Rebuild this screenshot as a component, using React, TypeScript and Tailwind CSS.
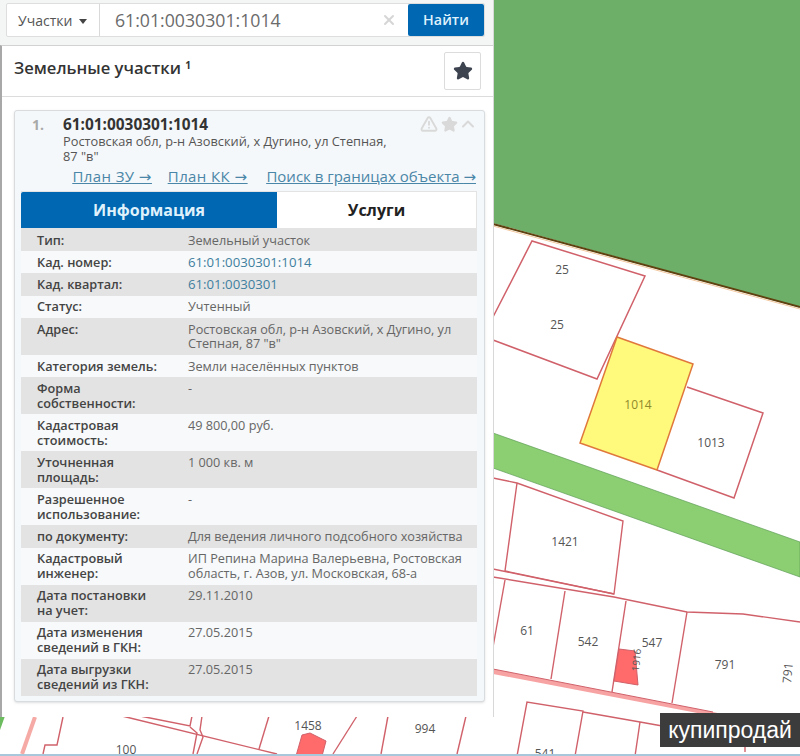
import { ChevronUp, Star, TriangleAlert, X } from "lucide-react";

const rows = [
  { label: "Тип:", value: "Земельный участок" },
  { label: "Кад. номер:", value: "61:01:0030301:1014", link: true },
  { label: "Кад. квартал:", value: "61:01:0030301", link: true },
  { label: "Статус:", value: "Учтенный" },
  { label: "Адрес:", value: "Ростовская обл, р-н Азовский, х Дугино, ул\nСтепная, 87 \"в\"" },
  { label: "Категория земель:", value: "Земли населённых пунктов" },
  { label: "Форма\nсобственности:", value: "-" },
  { label: "Кадастровая\nстоимость:", value: "49 800,00 руб." },
  { label: "Уточненная\nплощадь:", value: "1 000 кв. м" },
  { label: "Разрешенное\nиспользование:", value: "-" },
  { label: "по документу:", value: "Для ведения личного подсобного хозяйства" },
  { label: "Кадастровый\nинженер:", value: "ИП Репина Марина Валерьевна, Ростовская\nобласть, г. Азов, ул. Московская, 68-а" },
  { label: "Дата постановки\nна учет:", value: "29.11.2010" },
  { label: "Дата изменения\nсведений в ГКН:", value: "27.05.2015" },
  { label: "Дата выгрузки\nсведений из ГКН:", value: "27.05.2015" },
];

const lines = [
  "493,478 517,483 623,521 614,594 505,571 517,483",
  "493,569 614,594",
  "493,577 614,597 687,612 743,614 800,622",
  "505,580 493,647",
  "565,591 551,679",
  "626,601 612,692",
  "687,612 672,703",
  "517,756 527,702 583,711 575,756",
  "583,712 640,722 668,727",
  "640,722 635,756",
  "745,746 745,752",
  "63,717 57,745 45,745 43,754",
  "122,716 277,754",
  "140,716 190,726 192,716",
  "202,716 200,730 203,737 197,754",
  "190,727 197,733 193,754",
  "269,716 259,749",
  "357,716 333,754",
  "388,716 381,754",
  "466,716 457,754",
];

const labels = [
  { x: 562, y: 274, t: "25" },
  { x: 557, y: 329, t: "25" },
  { x: 638, y: 409, t: "1014", c: "#8f8a2c" },
  { x: 711, y: 447, t: "1013" },
  { x: 565, y: 546, t: "1421" },
  { x: 527, y: 635, t: "61" },
  { x: 588, y: 646, t: "542" },
  { x: 652, y: 647, t: "547" },
  { x: 725, y: 669, t: "791" },
  { x: 308, y: 730, t: "1458" },
  { x: 425, y: 733, t: "994" },
  { x: 126, y: 754, t: "100" },
  { x: 545, y: 758, t: "541" },
];

function MapLayer() {
  return (
    <svg className="absolute inset-0" width="800" height="756" viewBox="0 0 800 756">
      <polygon points="493,0 800,0 800,307 493,223" fill="#6dae68" />
      <line x1="493" y1="224" x2="800" y2="307" stroke="#5f4210" strokeWidth="2" />
      <line x1="493" y1="226" x2="800" y2="309" stroke="#f3c9a0" strokeWidth="1" />
      <polygon points="493,433 800,542 800,577 493,468" fill="#8ccf72" stroke="#5f9e57" strokeWidth="0.7" />
      <polyline points="493,317 532,241 645,276 597,379 493,340" fill="#fff" stroke="#d0616a" strokeWidth="1.5" />
      <polyline points="687,387 763,413 734,498 657,470" fill="#fff" stroke="#d0616a" strokeWidth="1.5" />
      <polygon points="617,337 693,364 657,470 580,443" fill="#fff97c" stroke="#e0783c" strokeWidth="1.5" />
      <polygon points="493,669 713,712 740,718 713,716 493,674" fill="#f7a3a3" />
      <line x1="493" y1="669" x2="713" y2="712" stroke="#d0616a" strokeWidth="1" />
      <line x1="35" y1="717" x2="22" y2="754" stroke="#f5aaa5" strokeWidth="4" />
      <polygon points="0,716 5,716 0,730" fill="#6dbb5f" />
      {lines.map((points) => (
        <polyline key={points} points={points} fill="none" stroke="#d0616a" strokeWidth="1.4" />
      ))}
      <polygon points="619,649 635,651 638,685 614,681" fill="#ff6a6a" stroke="#d0616a" />
      <polygon points="302,735 310,733 326,741 322,756 296,756" fill="#ff6a6a" stroke="#d0616a" />
      {labels.map((l) => (
        <text
          key={l.t + l.x}
          x={l.x}
          y={l.y}
          textAnchor="middle"
          fontSize="12"
          fill={l.c ?? "#555"}
          fontFamily="'Open Sans', sans-serif"
        >
          {l.t}
        </text>
      ))}
      <text x="636" y="664" textAnchor="middle" fontSize="10" fill="#555" fontFamily="'Open Sans', sans-serif" transform="rotate(-84 636 660)">
        1916
      </text>
      <text x="788" y="677" textAnchor="middle" fontSize="12" fill="#555" fontFamily="'Open Sans', sans-serif" transform="rotate(-84 788 673)">
        791
      </text>
    </svg>
  );
}

function SearchBar() {
  return (
    <div className="h-[45px] bg-[#f4f5f5] pt-[3px] pl-[6px] pr-2">
      <div className="flex h-[34px] w-[479px] rounded-[2px] border border-[#dedede] bg-white">
        <div className="flex w-[93px] items-center gap-[7px] border-r border-[#d9d9d9] pl-[11px] text-[14px] text-[#555]">
          Участки
          <span className="mt-[2px] h-0 w-0 border-x-[4.5px] border-t-[5px] border-x-transparent border-t-[#444]" />
        </div>
        <div className="flex-1 pl-[15px] text-[17.7px] leading-[32px] text-[#6b6b6b]">61:01:0030301:1014</div>
        <X className="mt-[8px] mr-[11px] size-[16px] text-[#d6d6d6]" strokeWidth={3} />
        <button className="w-[76px] rounded-[2px] bg-[#0067b3] text-[14.3px] font-semibold text-[#dff1fb]">Найти</button>
      </div>
    </div>
  );
}

function Links() {
  const arrow = <span className="font-['DejaVu_Sans',sans-serif]">→</span>;
  return (
    <div className="mt-[2px] flex justify-end pr-[1px] text-[15px] leading-[20px] text-[#4a86a8] underline">
      <a className="tracking-[0.4px]">План ЗУ {arrow}</a>
      <a className="ml-[16px] tracking-[0.4px]">План КК {arrow}</a>
      <a className="ml-[19px]">Поиск в границах объекта {arrow}</a>
    </div>
  );
}

function InfoRows() {
  return (
    <div className="text-[12.7px] leading-[14.8px]">
      {rows.map((row, index) => (
        <div key={row.label} className={`flex py-[3.73px] ${index % 2 === 0 ? "bg-[#e3e3e3]" : "bg-[#f7f9fa]"}`}>
          <div className="w-[167px] shrink-0 whitespace-pre-line pl-[16px] font-semibold text-[#444]">{row.label}</div>
          <div className={`whitespace-pre-line ${row.link ? "text-[13.2px] text-[#3f7f9f]" : "text-[#666]"}`}>{row.value}</div>
        </div>
      ))}
    </div>
  );
}

export default function App() {
  return (
    <div className="relative h-[756px] w-[800px] overflow-hidden bg-white font-['Open_Sans',sans-serif]">
      <MapLayer />
      <div className="relative w-[494px] border-r border-[#d8d8d8]">
        <SearchBar />
        <div className="border-t border-[#d2d2d2] border-l-2 border-l-[#a8a8a8] bg-white pb-[15px]">
          <div className="flex h-[51px] items-center justify-between border-b border-[#dcdcdc] pl-[12px] pr-[12px]">
            <h2 className="mb-[6px] text-[16.6px] font-semibold text-[#333]">
              Земельные участки <sup className="text-[10px] font-bold">1</sup>
            </h2>
            <button className="flex h-[38px] w-[37px] items-center justify-center rounded-[2px] border border-[#dcdcdc] bg-white">
              <Star className="size-[20px] fill-[#3d4450] text-[#3d4450]" />
            </button>
          </div>
          <div className="ml-[12px] mr-[8px] mt-[13px] rounded-[3px] border border-[#d8dcdf] bg-[#f5f8fa] pl-[6px] pr-[7px] pb-[5px] shadow-sm">
            <div className="flex pt-[4px]">
              <div className="w-[42px] pl-[11px] text-[14px] leading-[20px] font-bold text-[#a9a9a9]">1.</div>
              <div className="flex-1">
                <div className="text-[15.4px] leading-[20px] font-bold text-[#333]">61:01:0030301:1014</div>
                <div className="-mt-[1px] text-[12.8px] leading-[15px] text-[#555]">
                  Ростовская обл, р-н Азовский, х Дугино, ул Степная,
                  <br />
                  87 "в"
                </div>
              </div>
              <div className="-mr-[1px] flex h-[18px] items-center">
                <TriangleAlert className="size-[18px] text-[#d9d9d9]" strokeWidth={2.5} />
                <Star className="ml-[3px] size-[17px] fill-[#d9d9d9] text-[#d9d9d9]" />
                <ChevronUp className="size-[20px] text-[#d9d9d9]" strokeWidth={2.5} />
              </div>
            </div>
            <Links />
            <div className="mt-[4px] flex h-[38px] border-y border-r border-[#e3e3e3] bg-white text-[16px] font-bold">
              <div className="flex w-[256px] items-center justify-center rounded-tl-[2px] bg-[#0067b3] text-[#dff1fb]">Информация</div>
              <div className="flex flex-1 items-center justify-center text-[#222]">Услуги</div>
            </div>
            <InfoRows />
          </div>
        </div>
      </div>
      <div className="absolute right-0 top-[713px] flex h-[34px] w-[140px] items-center justify-center bg-[#3c3c3c] font-['Liberation_Sans',sans-serif] text-[23px] text-white">
        купипродай
      </div>
      <div className="absolute inset-x-0 bottom-0 h-[2px] bg-[#a9c7da]" />
    </div>
  );
}
